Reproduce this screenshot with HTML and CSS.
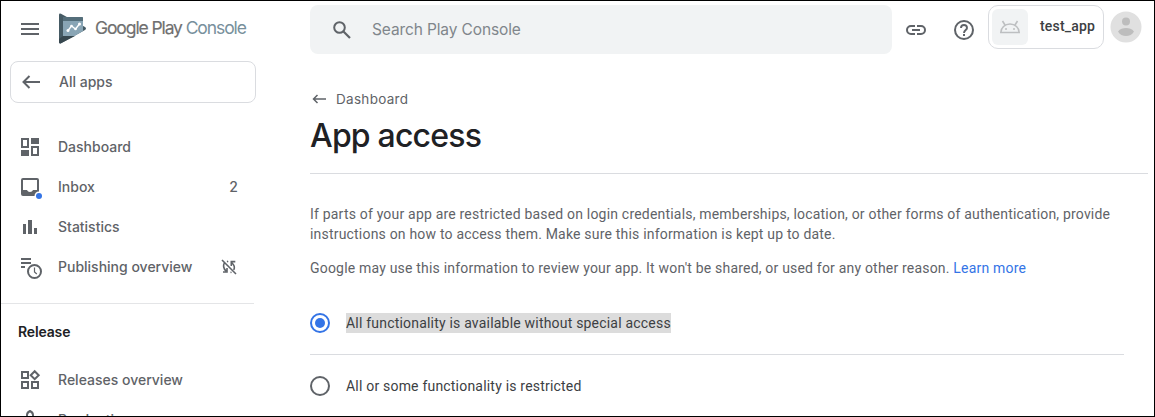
FILE: index.html
```html
<!DOCTYPE html>
<html lang="en">
<head>
<meta charset="utf-8">
<title>App access | Google Play Console</title>
<link rel="stylesheet" href="styles.css">
</head>
<body>
<div class="page">
  <aside class="sidebar">
    <div class="brand">
      <svg class="menu-icon" width="18" height="12" viewBox="0 0 18 12"><path fill="#5f6368" d="M0 0h18v2H0zM0 5h18v2H0zM0 10h18v2H0z"/></svg>
      <svg class="logo" width="28" height="31" viewBox="0 0 28 31">
        <path fill="#455a64" d="M0 2Q0 0 2 .8L26 14Q28 15.500 26 17L2 30.200Q0 31 0 29z"/>
        <path fill="#37474f" d="M0 26l4-3h12L2 30.200Q0 31 0 29z"/>
        <path fill="#546e7a" d="M4 4h19.500q.5 0 .5.500V8H4z"/>
        <path fill="#89a5b5" d="M4 8h20v10L15.500 23H4z"/>
        <path fill="none" stroke="#fff" stroke-width="1.300" d="M9 17.500l3.500-4.500 4 3 4-5"/>
        <g fill="#fff"><circle cx="9" cy="17.500" r="1.500"/><circle cx="12.500" cy="13" r="1.300"/><circle cx="16.500" cy="16" r="1.300"/><circle cx="20.500" cy="11" r="1.500"/></g>
      </svg>
      <span class="wordmark"><span class="wm-play">Google Play</span> <span class="wm-console">Console</span></span>
    </div>
    <a class="all-apps">
      <svg width="18" height="14" viewBox="0 0 18 14"><path fill="none" stroke="#5f6368" stroke-width="2" d="M18 7H2M7.500 1L1.500 7l6 6"/></svg>
      <span class="all-apps-label">All apps</span>
    </a>
    <nav class="nav">
      <a class="nav-item">
        <svg class="nav-icon" width="24" height="24" viewBox="0 0 24 24"><path fill="#5f6368" fill-rule="evenodd" d="M3 3h8v10H3zm2 2v6h4V5zM13 3h8v6h-8zM3 15h8v6H3zM13 11h8v10h-8zm2 2v6h4v-6z"/></svg>
        <span class="label t-dashboard">Dashboard</span>
      </a>
      <a class="nav-item">
        <svg class="nav-icon" width="24" height="24" viewBox="0 0 24 24"><path fill="#5f6368" fill-rule="evenodd" d="M5 3h14a2 2 0 0 1 2 2v14a2 2 0 0 1-2 2H5a2 2 0 0 1-2-2V5a2 2 0 0 1 2-2zm0 2v10h4c.5 1.200 1.600 2 3 2s2.500-.8 3-2h4V5z"/><circle cx="21" cy="21" r="4.500" fill="#fff"/><circle cx="21" cy="21" r="3" fill="#3474e6"/></svg>
        <span class="label t-inbox">Inbox</span><span class="count">2</span>
      </a>
      <a class="nav-item">
        <svg class="nav-icon" width="24" height="24" viewBox="0 0 24 24"><path fill="#5f6368" d="M5 9h3v10H5zM10 5h4v14h-4zM16 13h3v6h-3z"/></svg>
        <span class="label t-statistics">Statistics</span>
      </a>
      <a class="nav-item">
        <svg class="nav-icon" width="24" height="24" viewBox="0 0 24 24"><path fill="#5f6368" d="M3 3h10v2H3zM3 7h10v2H3zM3 11h4v2H3z"/><circle cx="16.500" cy="16.500" r="8.200" fill="#fff"/><circle cx="16.500" cy="16.500" r="6.500" fill="none" stroke="#5f6368" stroke-width="2"/><path fill="none" stroke="#5f6368" stroke-width="1.200" d="M16.500 12.500v4.500l2.300 2"/></svg>
        <span class="label t-publishing">Publishing overview</span>
        <svg class="sync-off" width="16" height="16" viewBox="0 0 16 16"><path fill="none" stroke="#5f6368" stroke-width="1.600" d="M1 1l14 14M3.300 4C1.800 7 2.500 9.500 5 12M2 13h4V9M6 2.800l1.200-.5M10.300 7V2.600h4M10.500 3.500c3 2.500 3.500 5 2.300 7.500M9.500 13.500l1-.3"/></svg>
      </a>
    </nav>
    <h2 class="section-title">Release</h2>
    <nav class="release-nav">
      <a class="nav-item">
        <svg class="nav-icon" width="24" height="24" viewBox="0 0 24 24"><path fill="none" stroke="#5f6368" stroke-width="2" d="M4 4h6v6H4zM4 14h6v6H4zM14 14h6v6h-6zM16.700 3.200l4 4-4 4-4-4z"/></svg>
        <span class="label t-releases">Releases overview</span>
      </a>
      <a class="nav-item">
        <svg class="nav-icon" width="24" height="24" viewBox="0 0 24 24"><path fill="none" stroke="#5f6368" stroke-width="2" d="M9 12V7c0-2 1-3 3-4 2 1 3 2 3 4v5M9 11l-4 4v4h14v-4l-4-4"/></svg>
        <span class="label t-production">Production</span>
      </a>
    </nav>
  </aside>
  <div class="content">
    <header class="topbar">
      <div class="search">
        <svg width="18" height="18" viewBox="0 0 18 18"><circle cx="6.500" cy="6.500" r="5.300" fill="none" stroke="#5f6368" stroke-width="2"/><path fill="none" stroke="#5f6368" stroke-width="2.200" d="M10.500 10.500l6.500 6.500"/></svg>
        <span class="search-text">Search Play Console</span>
      </div>
      <svg class="link-icon" width="20" height="10" viewBox="0 0 20 10"><path fill="none" stroke="#5f6368" stroke-width="2" d="M9 1H5a4 4 0 0 0 0 8h4M11 1h4a4 4 0 0 1 0 8h-4M6 5h8"/></svg>
      <svg class="help-icon" width="20" height="20" viewBox="0 0 20 20"><circle cx="10" cy="10" r="9" fill="none" stroke="#5f6368" stroke-width="2"/><path fill="none" stroke="#5f6368" stroke-width="1.900" d="M7 8a3 3 0 1 1 6 0c0 2-3 2.300-3 5"/><path fill="#5f6368" d="M9 14h2v2H9z"/></svg>
      <div class="app-chip">
        <span class="app-thumb"><svg width="22" height="14" viewBox="0 0 22 14"><path fill="none" stroke="#bdbfc1" stroke-width="1.600" d="M1.800 12.500a9.200 8.500 0 0 1 18.400 0zM6 5L3.500 1M16 5l2.500-4"/><circle cx="7" cy="9" r="1" fill="#bdbfc1"/><circle cx="15" cy="9" r="1" fill="#bdbfc1"/></svg></span>
        <span class="app-name">test_app</span>
      </div>
      <svg class="avatar" width="32" height="32" viewBox="0 0 32 32"><circle cx="16" cy="16" r="15.500" fill="#e0e0e0"/><circle cx="16" cy="10.500" r="4" fill="#bdbdbd"/><path fill="#bdbdbd" d="M8 20.500c2-2.800 5-3.500 8-3.500s6 .7 8 3.500c-1.500 3-4.800 4.500-8 4.500s-6.500-1.500-8-4.500z"/></svg>
    </header>
    <main class="main">
      <a class="crumb">
        <svg width="14" height="10" viewBox="0 0 14 10"><path fill="none" stroke="#5f6368" stroke-width="1.500" d="M14 5H1.500M5.500 1l-4 4 4 4"/></svg>
        <span class="crumb-label">Dashboard</span>
      </a>
      <h1 class="title">App access</h1>
      <div class="intro">
        <p class="para para-first">If parts of your app are restricted based on login credentials, memberships, location, or other forms of authentication, provide<br>instructions on how to access them. Make sure this information is kept up to date.</p>
        <p class="para para-second">Google may use this information to review your app. It won't be shared, or used for any other reason. <a class="learn">Learn more</a></p>
      </div>
      <div class="options">
        <label class="option option-selected"><span class="radio radio-on"></span><span class="option-text selected-text">All functionality is available without special access</span></label>
        <label class="option"><span class="radio"></span><span class="option-text">All or some functionality is restricted</span></label>
      </div>
    </main>
  </div>
</div>
</body>
</html>
```
FILE: styles.css
```css
* { box-sizing: border-box; }
body { margin: 0; background: #fff; color: #5f6368; overflow: hidden; }
svg { display: block; flex: none; }
h1, h2, p { margin: 0; }

.page {
  display: flex;
  height: 417px;
  overflow: hidden;
  border: 1px solid #000;
  font-family: Roboto, "Liberation Sans", sans-serif;
}

.sidebar {
  flex: none;
  width: 309px;
  font-family: Inter, Roboto, sans-serif;
  font-weight: 500;
  font-size: 14px;
}
.brand { display: flex; align-items: center; height: 60px; padding: 0 0 5px 20px; }
.logo { margin-left: 20px; }
.wordmark { margin-left: 8px; padding-bottom: 2px; font-size: 17.500px; font-weight: 400; letter-spacing: -1.100px; white-space: nowrap; }
.wm-play { color: #707070; -webkit-text-stroke: 0.150px #707070; }
.wm-console { color: #78909c; }
.all-apps {
  display: flex;
  align-items: center;
  gap: 19px;
  width: 246px;
  height: 42px;
  margin-left: 9px;
  padding-left: 11px;
  border: 1px solid #dadce0;
  border-radius: 8px;
}
.all-apps-label { padding-bottom: 2px; }
.nav { width: 253px; height: 201px; padding-top: 24px; border-bottom: 1px solid #e4e5e7; }
.nav-item { display: flex; align-items: center; height: 40px; padding-left: 17px; white-space: nowrap; }
.label { margin-left: 16px; padding-bottom: 2px; }
.count { margin-left: auto; margin-right: 16px; padding-bottom: 2px; }
.sync-off { margin-left: auto; margin-right: 17px; }
.section-title { height: 56px; padding-left: 17px; font-size: 14px; font-weight: 600; line-height: 56px; letter-spacing: -0.150px; color: #202124; }

.content { flex: 1; min-width: 0; }
.topbar { display: flex; align-items: center; height: 57px; }
.search {
  display: flex;
  align-items: center;
  gap: 21px;
  width: 582px;
  height: 49px;
  padding-left: 23px;
  border-radius: 8px;
  background: #f1f3f4;
}
.search-text { color: #80868b; font-family: Inter, sans-serif; font-size: 15.500px; letter-spacing: -0.120px; }
.link-icon { margin-left: 14px; }
.help-icon { margin-left: 28px; }
.app-chip {
  display: flex;
  align-items: center;
  width: 116px;
  height: 44px;
  margin: 0 0 5px 14px;
  padding-left: 3px;
  border: 1px solid #dadce0;
  border-radius: 10px;
}
.app-thumb { display: grid; place-items: center; width: 36px; height: 36px; border-radius: 6px; background: #f1f3f4; }
.app-name { margin-left: 12px; padding-bottom: 2px; color: #3c4043; font-size: 14px; font-weight: 500; letter-spacing: 0.200px; }
.avatar { margin: 0 0 5px 6px; }

.crumb { display: flex; align-items: center; gap: 10px; height: 20px; margin-top: 31px; padding-left: 2px; }
.crumb-label { font-family: Inter, sans-serif; font-size: 13.500px; letter-spacing: 0.300px; }
.title {
  width: 838px;
  height: 65px;
  border-bottom: 1px solid #dadce0;
  color: #202124;
  font-family: Inter, sans-serif;
  font-size: 32px;
  font-weight: 500;
  line-height: 54px;
  letter-spacing: -0.800px;
}
.para { font-size: 14px; line-height: 20px; letter-spacing: 0.195px; white-space: nowrap; }
.para-first { padding-top: 30px; }
.para-second { padding-top: 14px; }
.learn { color: #3474e6; }
.options { width: 814px; padding-top: 14px; }
.option { display: flex; align-items: center; gap: 16px; height: 62px; }
.option-selected { height: 63px; border-bottom: 1px solid #dadce0; }
.radio { display: grid; place-items: center; width: 20px; height: 20px; border: 2px solid #5f6368; border-radius: 50%; }
.radio-on { border-color: #3474e6; }
.radio-on::after { content: ""; width: 10px; height: 10px; border-radius: 50%; background: #3474e6; }
.option-text { color: #3c4043; font-size: 14px; line-height: 20px; letter-spacing: 0.200px; }
.selected-text { background: #dcdcdc; }
```
